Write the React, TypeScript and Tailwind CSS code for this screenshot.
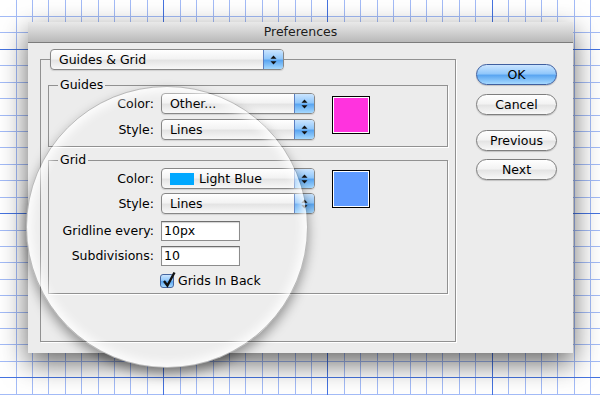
import React from "react";

const popupBg =
  "bg-[linear-gradient(#ffffff,#f3f3f3_45%,#e4e4e4_55%,#f8f8f8)]";
const aquaBlue =
  "bg-[linear-gradient(#cbe5ff,#92c8fb_45%,#5ba6f1_55%,#a6d9ff)]";

function GridPaper() {
  const xs = Array.from({ length: 37 }, (_, k) => 15.5 + k * 16.42).filter((x) => x < 600);
  const ys = Array.from({ length: 24 }, (_, k) => 16.06 + k * 16.42).filter((y) => y < 395);
  const minorX = xs.filter((_, k) => k % 10 !== 9);
  const majorX = xs.filter((_, k) => k % 10 === 9);
  const minorY = ys.filter((_, k) => k % 10 !== 2);
  const majorY = ys.filter((_, k) => k % 10 === 2);
  const px = (v: number) => Math.round(v) + 0.5;
  return (
    <svg className="absolute inset-0" width={600} height={395}>
      {minorX.map((x) => (
        <line key={"vx" + x} x1={px(x)} x2={px(x)} y1={0} y2={395} stroke="#a3bbf7" />
      ))}
      {minorY.map((y) => (
        <line key={"hy" + y} y1={px(y)} y2={px(y)} x1={0} x2={600} stroke="#a3bbf7" />
      ))}
      {majorX.map((x) => (
        <line key={"mx" + x} x1={px(x)} x2={px(x)} y1={0} y2={395} stroke="#4573e0" />
      ))}
      {majorY.map((y) => (
        <line key={"my" + y} y1={px(y)} y2={px(y)} x1={0} x2={600} stroke="#4573e0" />
      ))}
    </svg>
  );
}

function Arrows() {
  return (
    <svg width="7" height="10" viewBox="0 0 7 10">
      <polygon points="3.5,0.5 6.5,3.8 0.5,3.8" fill="#111" />
      <polygon points="0.5,6.2 6.5,6.2 3.5,9.5" fill="#111" />
    </svg>
  );
}

function Popup({ className, children }: { className: string; children: React.ReactNode }) {
  return (
    <div
      className={`flex h-[21px] overflow-hidden rounded-[4px] border border-[#878787] shadow-[0_1px_1px_rgba(0,0,0,0.12)] ${popupBg} ${className}`}
    >
      <div className="flex flex-1 items-center gap-[5px] pl-[8px] text-black">{children}</div>
      <div
        className={`flex w-[20px] items-center justify-center border-l border-[#5a7fc2] ${aquaBlue}`}
      >
        <Arrows />
      </div>
    </div>
  );
}

function Row({ label, className, children }: { label: string; className: string; children: React.ReactNode }) {
  return (
    <div className={`flex h-[21px] items-center ${className}`}>
      <span className="w-[105px] text-right">{label}</span>
      <div className="ml-[7px]">{children}</div>
    </div>
  );
}

function Field({ label, value, className }: { label: string; value: string; className: string }) {
  return (
    <div className={`flex h-[20px] items-center ${className}`}>
      <span className="w-[105px] text-right">{label}</span>
      <div className="ml-[7px] flex h-[20px] w-[79px] items-center border border-[#8c8c8c] border-t-[#6e6e6e] bg-white pl-[2px] shadow-[inset_0_1px_1px_rgba(0,0,0,0.18)]">
        {value}
      </div>
    </div>
  );
}

function Swatch({ color, className }: { color: string; className: string }) {
  return (
    <div className={`h-[38px] w-[38px] border border-black bg-white p-px ${className}`}>
      <div className="h-full w-full" style={{ background: color }} />
    </div>
  );
}

function AquaButton({ label, primary, className }: { label: string; primary?: boolean; className: string }) {
  return (
    <button
      className={`flex h-[21px] w-[81px] items-center justify-center rounded-full border text-[12.5px] text-black shadow-[0_1px_1px_rgba(0,0,0,0.18)] ${
        primary ? `border-[#3f5f9f] ${aquaBlue}` : `border-[#7e7e7e] ${popupBg}`
      } ${className}`}
    >
      {label}
    </button>
  );
}

export default function App() {
  return (
    <div className="relative h-[395px] w-[600px] overflow-hidden bg-white font-[family-name:DejaVu_Sans,sans-serif] text-[12.5px] leading-[14px] text-black">
      <GridPaper />

      {/* Preferences window */}
      <div className="absolute left-[28px] top-[22px] h-[331px] w-[545px] bg-[#ececec] shadow-[0_10px_26px_rgba(0,0,0,0.6)]">
        <div className="relative z-[2] flex h-[21px] items-center justify-center border-b border-[#7c7c7c] bg-[linear-gradient(#e9e9e9,#d2d2d2_50%,#b9b9b9)] text-[#1c1c1c]">
          Preferences
        </div>

        <div className="relative z-[2] flex pl-[12px] pt-[6px]">
          <fieldset className="w-[416px] border border-[#919191] px-[7px] pb-[47px] shadow-[1px_1px_0_#ffffff]">
            <legend className="ml-[2px] p-0">
              <Popup className="w-[234px]">Guides &amp; Grid</Popup>
            </legend>

            <fieldset className="mt-[8px] border border-[#919191] pb-[6px] shadow-[1px_1px_0_#ffffff]">
              <legend className="ml-[9px] px-[2px] leading-[14px]">Guides</legend>
              <div className="flex items-start">
                <div className="flex flex-col">
                  <Row label="Color:" className="mt-[1px]">
                    <Popup className="w-[154px]">Other...</Popup>
                  </Row>
                  <Row label="Style:" className="mt-[5px]">
                    <Popup className="w-[154px]">Lines</Popup>
                  </Row>
                </div>
                <Swatch color="#ff33de" className="ml-[17px] mt-[4px]" />
              </div>
            </fieldset>

            <fieldset className="mt-[6px] border border-[#919191] pb-[5px] shadow-[1px_1px_0_#ffffff]">
              <legend className="ml-[9px] px-[2px] leading-[14px]">Grid</legend>
              <div className="flex items-start">
                <div className="flex flex-col">
                  <Row label="Color:" className="mt-[1px]">
                    <Popup className="w-[154px]">
                      <span className="h-[12px] w-[24px] bg-[#00a8ff]" />
                      Light Blue
                    </Popup>
                  </Row>
                  <Row label="Style:" className="mt-[4px]">
                    <Popup className="w-[154px]">Lines</Popup>
                  </Row>
                </div>
                <Swatch color="#5e9aff" className="ml-[17px] mt-[3px]" />
              </div>
              <Field label="Gridline every:" value="10px" className="mt-[7px]" />
              <Field label="Subdivisions:" value="10" className="mt-[5px]" />
              <div className="mt-[8px] flex h-[14px] items-center pl-[111px]">
                <span
                  className={`relative h-[14px] w-[14px] rounded-[3px] border border-[#46669f] ${aquaBlue}`}
                >
                  <svg className="absolute -top-[4px] left-[1px]" width="14" height="17" viewBox="0 0 14 17">
                    <path d="M2 10 L5.4 14.5 L12.5 1.5" fill="none" stroke="#111" strokeWidth="2.4" />
                  </svg>
                </span>
                <span className="ml-[4px]">Grids In Back</span>
              </div>
            </fieldset>
          </fieldset>

          <div className="ml-[20px] mt-[15px] flex flex-col">
            <AquaButton label="OK" primary className="" />
            <AquaButton label="Cancel" className="mt-[9px]" />
            <AquaButton label="Previous" className="mt-[15px]" />
            <AquaButton label="Next" className="mt-[8px]" />
          </div>
        </div>
      </div>

      {/* magnifier lens: fill under the controls, rim over them */}
      <div className="pointer-events-none absolute left-[26px] top-[86px] z-[1] h-[282px] w-[282px] rounded-full bg-[radial-gradient(circle,#ededed_70%,#f3f3f3_95%,#fafafa)]" />
      <div className="pointer-events-none absolute left-[26px] top-[86px] z-[3] h-[282px] w-[282px] rounded-full border border-[rgba(0,0,0,0.22)] shadow-[inset_0_0_10px_5px_rgba(255,255,255,0.85),0_6px_12px_rgba(0,0,0,0.38)]" />
    </div>
  );
}
